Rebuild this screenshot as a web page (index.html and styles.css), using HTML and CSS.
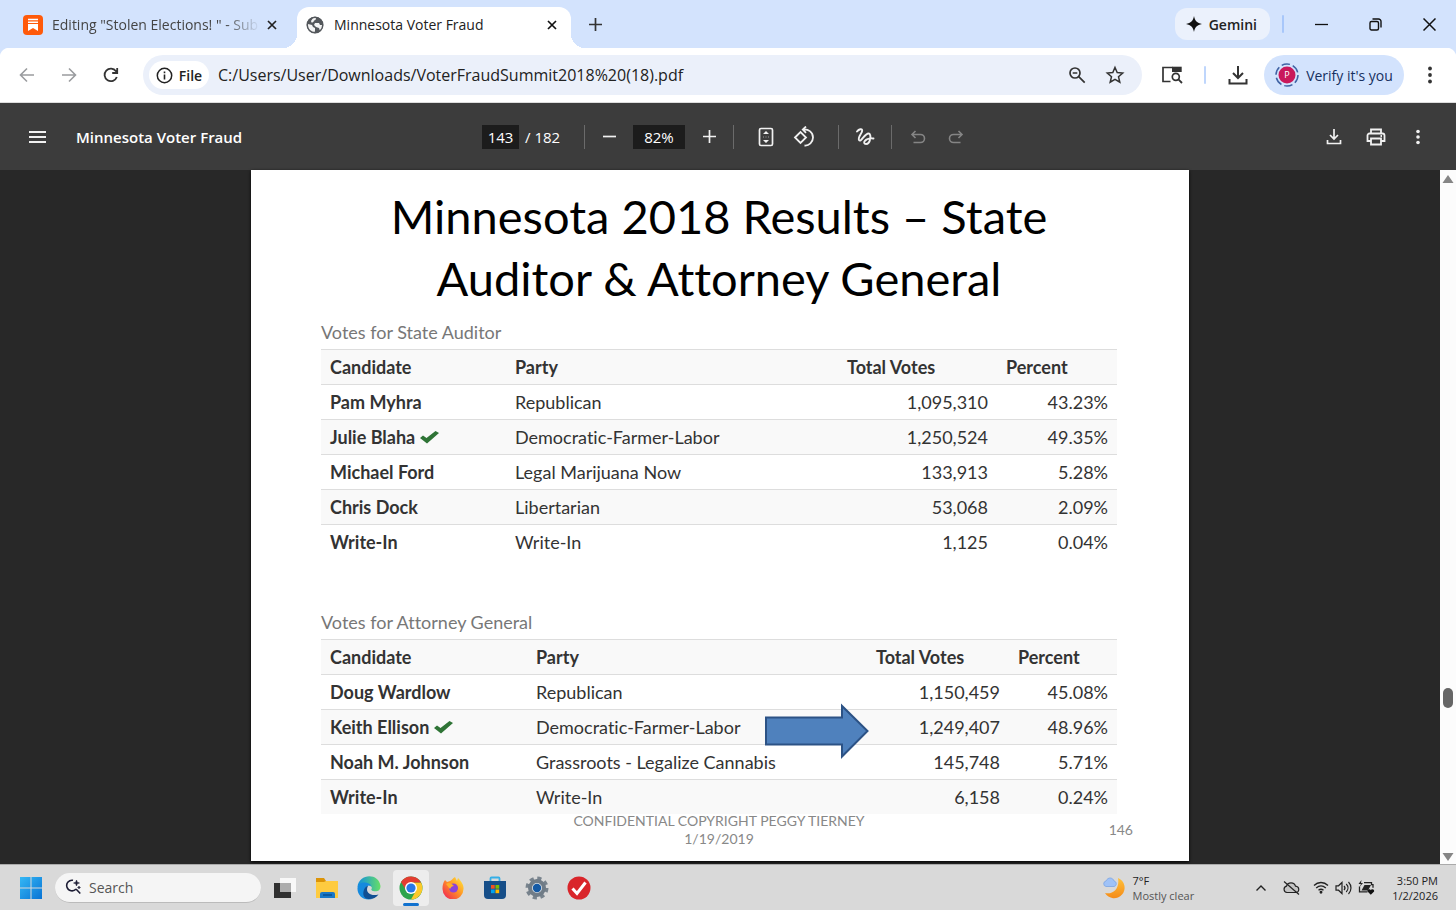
FILE: index.html
```html
<!DOCTYPE html>
<html lang="en">
<head>
    <meta charset="UTF-8">
    <meta name="viewport" content="width=device-width, initial-scale=1.0">
    <title>Minnesota Voter Fraud</title>
    <link rel="stylesheet" href="styles.css">
</head>
<body>
    <!-- tabs -->
    <header class="tab-strip">
        <div class="tab">
            <svg width="20" height="20" viewBox="0 0 20 20"><rect width="20" height="20" rx="4" fill="#ff5a0a"/><path d="M5 4.500h10M5 7.200h10" stroke="#fff" stroke-width="1.400"/><path d="M5 9h10v7l-5-3-5 3z" fill="#fff"/></svg>
            <span class="tab-title faded">Editing "Stolen Elections! " - Sub</span>
            <button class="tab-close" aria-label="Close tab"><svg width="10" height="10" viewBox="0 0 10 10"><path d="M1 1l8 8M9 1l-8 8" stroke="#222" stroke-width="1.700"/></svg></button>
        </div>
        <div class="tab active">
            <svg width="18" height="18" viewBox="0 0 18 18"><circle cx="9" cy="9" r="8.200" fill="#54585c"/><path d="M2 8l4 1 1 2 2 1v3l-1 2C4 16 1 12 2 8zM7 2l3-.5c0 2-.5 2.700-2 3-.3 1.500-1 2-2.500 2L5 5zM9 7h4l1 2h3c0 3-1 4.500-3 6l-1-3-3-1-2-2z" fill="#fff" opacity=".93"/><circle cx="9" cy="9" r="7.800" fill="none" stroke="#54585c" stroke-width="1.500"/></svg>
            <span class="tab-title">Minnesota Voter Fraud</span>
            <button class="tab-close" aria-label="Close tab"><svg width="10" height="10" viewBox="0 0 10 10"><path d="M1 1l8 8M9 1l-8 8" stroke="#111" stroke-width="1.700"/></svg></button>
        </div>
        <button class="new-tab" aria-label="New tab"><svg width="13" height="13" viewBox="0 0 13 13"><path d="M6.500 0v13M0 6.500h13" stroke="#333" stroke-width="1.700"/></svg></button>
        <div class="window-controls">
            <button class="gemini"><svg width="16" height="16" viewBox="0 0 16 16"><path d="M8 0C9 5 11 7 16 8 11 9 9 11 8 16 7 11 5 9 0 8 5 7 7 5 8 0z" fill="#111"/></svg>Gemini</button>
            <span class="bar-divider"></span>
            <button class="win-btn" aria-label="Minimize"><svg width="13" height="13" viewBox="0 0 13 13"><path d="M0 6.500h13" stroke="#111" stroke-width="1.300"/></svg></button>
            <button class="win-btn" aria-label="Restore"><svg width="13" height="13" viewBox="0 0 13 13" fill="none" stroke="#111" stroke-width="1.400"><rect x="1" y="3.500" width="8.500" height="8.500" rx="1.500"/><path d="M3.500 1h6A2.500 2.500 0 0 1 12 3.500v6"/></svg></button>
            <button class="win-btn" aria-label="Close"><svg width="13" height="13" viewBox="0 0 13 13"><path d="M.5.5l12 12M12.500.5l-12 12" stroke="#111" stroke-width="1.500"/></svg></button>
        </div>
    </header>

    <!-- address bar -->
    <nav class="toolbar">
        <div class="nav-buttons">
            <button class="icon-btn" aria-label="Back"><svg width="16" height="16" viewBox="0 0 16 16" fill="none" stroke="#9a9c9f" stroke-width="1.600"><path d="M15 8H2M8 1.500L1.500 8 8 14.500"/></svg></button>
            <button class="icon-btn" aria-label="Forward"><svg width="16" height="16" viewBox="0 0 16 16" fill="none" stroke="#9a9c9f" stroke-width="1.600"><path d="M1 8h13M8 1.500L14.500 8 8 14.500"/></svg></button>
            <button class="icon-btn" aria-label="Reload"><svg width="16" height="16" viewBox="0 0 16 16" fill="none" stroke="#333" stroke-width="1.800"><path d="M13.800 10A6.300 6.300 0 1 1 13 4.200L14 5.500M14.200 1v5H9.200"/></svg></button>
        </div>
        <div class="omnibox">
            <button class="file-chip"><svg width="17" height="17" viewBox="0 0 17 17"><circle cx="8.500" cy="8.500" r="7.200" fill="none" stroke="#222" stroke-width="1.500"/><path d="M8.500 7.600v4.800M8.500 4.500v1.700" stroke="#222" stroke-width="1.600"/></svg>File</button>
            <input type="text" aria-label="Address" value="C:/Users/User/Downloads/VoterFraudSummit2018%20(18).pdf">
            <button class="omni-btn" aria-label="Zoom"><svg width="18" height="18" viewBox="0 0 18 18" fill="none" stroke="#333" stroke-width="1.700"><circle cx="7" cy="7" r="5"/><path d="M10.700 10.700l6 6M4.700 7h4.600"/></svg></button>
            <button class="omni-btn" aria-label="Bookmark"><svg width="20" height="20" viewBox="0 0 20 20" fill="none" stroke="#333" stroke-width="1.500"><path d="M10 2.500l2.200 5.100 5.500.5-4.200 3.600 1.300 5.500L10 14.300l-4.800 2.900 1.300-5.500L2.300 8.100l5.500-.5z"/></svg></button>
        </div>
        <button class="icon-btn" aria-label="Search tabs"><svg width="22" height="20" viewBox="0 0 22 20"><path d="M9.500 16.500H2V2.500h9.500" fill="none" stroke="#333" stroke-width="1.700"/><path d="M11 1.700h9.700V7H11z" fill="#333"/><circle cx="14.800" cy="11.800" r="3.500" fill="#fff" stroke="#333" stroke-width="1.700"/><path d="M17.400 14.400l3.600 3.600" stroke="#333" stroke-width="1.800"/></svg></button>
        <span class="bar-divider"></span>
        <button class="icon-btn" aria-label="Downloads"><svg width="20" height="20" viewBox="0 0 20 20" fill="none" stroke="#333" stroke-width="2"><path d="M10 1v11.500M5 8l5 5 5-5M1.500 14v4.500h17V14"/></svg></button>
        <button class="profile">
            <svg width="24" height="24" viewBox="0 0 24 24"><circle cx="12" cy="12" r="11" fill="none" stroke="#3f62a4" stroke-width="1.500" stroke-dasharray="8.500 3"/><circle cx="12" cy="12" r="8.500" fill="#c9185b"/><text x="12" y="15" class="avatar-letter">P</text></svg>
            Verify it's you
        </button>
        <button class="icon-btn" aria-label="Menu"><svg width="4" height="18" viewBox="0 0 4 18" fill="#333"><circle cx="2" cy="2.500" r="1.900"/><circle cx="2" cy="9" r="1.900"/><circle cx="2" cy="15.500" r="1.900"/></svg></button>
    </nav>

    <!-- pdf viewer -->
    <div class="pdf-bar">
        <div class="pdf-left">
            <button class="pdf-btn" aria-label="Sidebar"><svg width="17" height="12" viewBox="0 0 17 12"><path d="M0 1h17M0 6h17M0 11h17" stroke="#f1f1f1" stroke-width="1.800"/></svg></button>
            <span class="pdf-title">Minnesota Voter Fraud</span>
        </div>
        <div class="pdf-center">
            <label class="page-count"><input type="text" class="page-input" value="143" aria-label="Page"> / 182</label>
            <div class="zoom-group">
                <button class="pdf-btn" aria-label="Zoom out"><svg width="13" height="13" viewBox="0 0 13 13"><path d="M0 6.500h13" stroke="#f1f1f1" stroke-width="1.700"/></svg></button>
                <input type="text" class="zoom-input" value="82%" aria-label="Zoom level">
                <button class="pdf-btn" aria-label="Zoom in"><svg width="13" height="13" viewBox="0 0 13 13"><path d="M0 6.500h13M6.500 0v13" stroke="#f1f1f1" stroke-width="1.700"/></svg></button>
            </div>
            <div class="fit-group">
                <button class="pdf-btn" aria-label="Fit to page"><svg width="16" height="20" viewBox="0 0 16 20"><rect x="1.500" y="1.500" width="13" height="17" rx="1.500" fill="none" stroke="#f1f1f1" stroke-width="1.700"/><path d="M8 4l3 3H5zM8 16l3-3H5z" fill="#f1f1f1"/><path d="M5 10h1M7.500 10h1M10 10h1" stroke="#999"/></svg></button>
                <button class="pdf-btn" aria-label="Rotate"><svg width="22" height="22" viewBox="0 0 22 22" fill="none" stroke="#f1f1f1" stroke-width="1.800"><path d="M2 11.500l5.500-5.500 5.500 5.500L7.500 17z"/><path d="M10 3.500c5-.8 10 2.500 10 8 0 4.500-4 8.500-8.500 8M13 .5l-3.200 3L13 6.800"/></svg></button>
            </div>
            <div class="ink-group">
                <button class="pdf-btn" aria-label="Draw"><svg width="20" height="18" viewBox="0 0 20 18" fill="none" stroke="#f1f1f1" stroke-width="1.900" stroke-linecap="round"><path d="M2 3.500C4 1 7 .3 7.200 2.500 7.400 5 2.500 9 4 12c2 3 5.500-6.500 9.500-6.500C17 5.500 15.500 16 11 16c-4 0-1.500-6.500 7.500-5.500"/></svg></button>
            </div>
            <div class="undo-group">
                <button class="pdf-btn" aria-label="Undo" disabled><svg width="16" height="14" viewBox="0 0 16 14" fill="none" stroke="#858585" stroke-width="1.600"><path d="M5.500 1L2 4.500 5.500 8M2 4.500h8.500a4 4 0 0 1 0 8H3.500"/></svg></button>
                <button class="pdf-btn" aria-label="Redo" disabled><svg width="16" height="14" viewBox="0 0 16 14" fill="none" stroke="#858585" stroke-width="1.600"><path d="M10.500 1L14 4.500 10.500 8M14 4.500H5.500a4 4 0 0 0 0 8h7"/></svg></button>
            </div>
        </div>
        <div class="pdf-right">
            <button class="icon-btn" aria-label="Download"><svg width="16" height="17" viewBox="0 0 16 17" fill="none" stroke="#f1f1f1" stroke-width="1.700"><path d="M8 1v9.500M4 7l4 4 4-4M1.500 12v3.500h13V12"/></svg></button>
            <button class="icon-btn" aria-label="Print"><svg width="20" height="18" viewBox="0 0 20 18" fill="none" stroke="#f1f1f1" stroke-width="1.800"><path d="M5 5V1.500h10V5M5 13H1.500V7.500A2 2 0 0 1 3.500 5.500h13a2 2 0 0 1 2 2V13H15"/><path d="M5 10.500h10v6H5z"/><path d="M14.500 8h1.500"/></svg></button>
            <button class="icon-btn" aria-label="More"><svg width="4" height="16" viewBox="0 0 4 16" fill="#f1f1f1"><circle cx="2" cy="2.500" r="1.800"/><circle cx="2" cy="8" r="1.800"/><circle cx="2" cy="13.500" r="1.800"/></svg></button>
        </div>
    </div>

    <main class="viewer">
        <div class="viewer-body">
            <section class="slide">
                <h1>Minnesota 2018 Results – State<br>Auditor &amp; Attorney General</h1>
                <div class="results auditor">
                    <table>
                        <caption>Votes for State Auditor</caption>
                        <thead>
                            <tr><th class="candidate">Candidate</th><th>Party</th><th class="votes">Total Votes</th><th class="percent">Percent</th></tr>
                        </thead>
                        <tbody>
                            <tr><th>Pam Myhra</th><td>Republican</td><td class="num">1,095,310</td><td class="num">43.23%</td></tr>
                            <tr><th>Julie Blaha <svg class="check" width="19" height="13" viewBox="0 0 19 13"><path d="M0 7l3-2.500 3.500 2.500L15.500 0 19 2 7 12.500z" fill="#2f7436"/></svg></th><td>Democratic-Farmer-Labor</td><td class="num">1,250,524</td><td class="num">49.35%</td></tr>
                            <tr><th>Michael Ford</th><td>Legal Marijuana Now</td><td class="num">133,913</td><td class="num">5.28%</td></tr>
                            <tr><th>Chris Dock</th><td>Libertarian</td><td class="num">53,068</td><td class="num">2.09%</td></tr>
                            <tr><th>Write-In</th><td>Write-In</td><td class="num">1,125</td><td class="num">0.04%</td></tr>
                        </tbody>
                    </table>
                </div>
                <div class="results attorney">
                    <table>
                        <caption>Votes for Attorney General</caption>
                        <thead>
                            <tr><th class="candidate">Candidate</th><th>Party</th><th class="votes">Total Votes</th><th class="percent">Percent</th></tr>
                        </thead>
                        <tbody>
                            <tr><th>Doug Wardlow</th><td>Republican</td><td class="num">1,150,459</td><td class="num">45.08%</td></tr>
                            <tr><th>Keith Ellison <svg class="check" width="19" height="13" viewBox="0 0 19 13"><path d="M0 7l3-2.500 3.500 2.500L15.500 0 19 2 7 12.500z" fill="#2f7436"/></svg></th><td>Democratic-Farmer-Labor</td><td class="num">1,249,407</td><td class="num">48.96%</td></tr>
                            <tr><th>Noah M. Johnson</th><td>Grassroots - Legalize Cannabis</td><td class="num">145,748</td><td class="num">5.71%</td></tr>
                            <tr><th>Write-In</th><td>Write-In</td><td class="num">6,158</td><td class="num">0.24%</td></tr>
                        </tbody>
                    </table>
                    <svg class="arrow" width="104" height="56" viewBox="0 0 104 56"><path d="M1 14.500h76V3l25.500 25L77 53.500V41.500H1z" fill="#4f81bd" stroke="#2c5285" stroke-width="2"/></svg>
                </div>
                <footer class="slide-footer">
                    <p>CONFIDENTIAL COPYRIGHT PEGGY TIERNEY<br>1/19/2019</p>
                    <span class="slide-number">146</span>
                </footer>
            </section>
        </div>
        <div class="scrollbar">
            <svg width="12" height="8" viewBox="0 0 12 8"><path d="M6 0l5.500 8H.5z" fill="#858585"/></svg>
            <span class="before-thumb"></span>
            <span class="thumb"></span>
            <span class="after-thumb"></span>
            <svg width="12" height="8" viewBox="0 0 12 8"><path d="M6 8L.5 0h11z" fill="#858585"/></svg>
        </div>
    </main>

    <!-- windows taskbar -->
    <footer class="taskbar">
        <button class="task-btn" aria-label="Start"><svg width="22" height="22" viewBox="0 0 22 22"><defs><linearGradient id="win" x1="0" y1="0" x2="1" y2="1"><stop offset="0" stop-color="#35b8f5"/><stop offset="1" stop-color="#0873d4"/></linearGradient></defs><path d="M0 0h10.500v10.500H0zM11.500 0H22v10.500H11.500zM0 11.500h10.500V22H0zM11.500 11.500H22V22H11.500z" fill="url(#win)"/></svg></button>
        <label class="search">
            <svg width="16" height="16" viewBox="0 0 16 16" fill="none" stroke="#1d1d35" stroke-width="1.600"><path d="M8 1.300A5.300 5.300 0 1 0 11 10M11 10l4.300 4.500"/><path d="M11.500 1l.8 2.200 2.200.8-2.200.8-.8 2.200-.8-2.200L8.500 4l2.200-.8zM14 7l.4 1.100 1.100.4-1.100.4L14 10l-.4-1.100-1.100-.4 1.100-.4z" fill="#1d1d35" stroke-width=".5"/></svg>
            <input type="text" placeholder="Search" aria-label="Search">
        </label>
        <button class="task-btn" aria-label="Task view"><svg width="24" height="22" viewBox="0 0 24 22"><path d="M1 6h17v15H1z" fill="#303030"/><path d="M7 1h16v14H7z" fill="#fafafa" opacity=".95"/><path d="M7 6h11v9H7z" fill="#adadad"/></svg></button>
        <button class="task-btn" aria-label="File Explorer"><svg width="24" height="22" viewBox="0 0 24 22"><path d="M1 1h8l2 3h12v6H1z" fill="#dc9408"/><path d="M1 5h8l2-1h12v17H1z" fill="#fecb40"/><path d="M5 21v-4a2 2 0 0 1 2-2h11a2 2 0 0 1 2 2v4z" fill="#1978c8"/><path d="M8 18h9" stroke="#074f91" stroke-width="1.500"/></svg></button>
        <button class="task-btn" aria-label="Edge"><svg width="24" height="24" viewBox="0 0 24 24"><defs><linearGradient id="edge" x1="0" y1="0" x2="1" y2="0"><stop offset="0" stop-color="#108ee0"/><stop offset="1" stop-color="#67df66"/></linearGradient></defs><path d="M.5 11C2-3 22-3 23.500 10c0 5-4 6-7.500 5-2-.7-2-1.500-1-3C14 8 3 7 .5 11z" fill="url(#edge)"/><path d="M.5 12C1 5 12 5 14.500 10 10 8 5 14 8.500 19c2 3 5 4 8 3.500C8 26 0 20 .5 12z" fill="#168ade"/><path d="M11 10c-3 5 1 11 10.500 8.500-5 7-17 6-15-3C7 12 9 10 11 10z" fill="#104f93"/></svg></button>
        <button class="task-btn current" aria-label="Chrome"><svg width="24" height="24" viewBox="0 0 24 24"><circle cx="12" cy="12" r="11.500" fill="#2da44b"/><path d="M12 6.500h10A11.500 11.500 0 0 1 12 23.500l5-9z" fill="#fdc928"/><path d="M2 6a11.500 11.500 0 0 1 20 .5H12L7 14z" fill="#e33c30"/><circle cx="12" cy="12" r="6" fill="#fff"/><circle cx="12" cy="12" r="4.600" fill="#2878e6"/></svg></button>
        <button class="task-btn" aria-label="Firefox"><svg width="22" height="22" viewBox="0 0 22 22"><defs><linearGradient id="fox" x1="1" y1="0" x2="0" y2="1"><stop offset="0" stop-color="#fff23f"/><stop offset=".45" stop-color="#ff9525"/><stop offset="1" stop-color="#ef155b"/></linearGradient></defs><path d="M3 3l2 2 3-1c1 0 3-3 5-4l2 4 1-3c3 3 6 7 5.500 11A10.500 10.500 0 0 1 .5 12C.5 8 1 6 3 3z" fill="url(#fox)"/><circle cx="11.500" cy="11" r="4.500" fill="#8b43d8"/><path d="M4 7c3-2 5-1 8 2-2 .3-3 1-4 3z" fill="#ffae28"/></svg></button>
        <button class="task-btn" aria-label="Microsoft Store"><svg width="24" height="24" viewBox="0 0 24 24"><path d="M7.500 6V2.500a1 1 0 0 1 1-1h7a1 1 0 0 1 1 1V6" fill="none" stroke="#35afe7" stroke-width="1.800"/><path d="M1 5h22v14a4 4 0 0 1-4 4H5a4 4 0 0 1-4-4z" fill="#164e88"/><path d="M8 9h3.700v3.700H8z" fill="#f25022"/><path d="M12.500 9h3.700v3.700h-3.700z" fill="#7fba00"/><path d="M8 13.500h3.700v3.700H8z" fill="#00a4ef"/><path d="M12.500 13.500h3.700v3.700h-3.700z" fill="#ffb900"/></svg></button>
        <button class="task-btn" aria-label="Settings"><svg width="24" height="24" viewBox="0 0 24 24"><circle cx="12" cy="12" r="9.500" fill="none" stroke="#78838d" stroke-width="4" stroke-dasharray="4 3.460"/><circle cx="12" cy="12" r="7" fill="#dce2e7" stroke="#707c87" stroke-width="4"/><circle cx="12" cy="12" r="4.200" fill="#145aa5"/></svg></button>
        <button class="task-btn" aria-label="Tasks"><svg width="24" height="24" viewBox="0 0 24 24"><circle cx="12" cy="12" r="11.500" fill="#d9252a"/><path d="M5.500 12.500l4.500 5L18.500 6.500" fill="none" stroke="#fff" stroke-width="3"/></svg></button>

        <div class="weather">
            <svg width="22" height="22" viewBox="0 0 22 22"><defs><linearGradient id="moon" x1="0" y1="0" x2="0" y2="1"><stop offset="0" stop-color="#ffc13b"/><stop offset="1" stop-color="#f58b18"/></linearGradient></defs><path d="M15 1a10.500 10.500 0 1 1-13 15C10 18 17 11 15 1z" fill="url(#moon)"/><path d="M3 9.500a2.800 2.800 0 0 1 0-5.500C5-.5 10 .5 11 4c3 .5 3 5 0 5.500z" fill="#9fc2f7" stroke="#719fe4" stroke-width=".7"/></svg>
            <p>7°F<br><span>Mostly clear</span></p>
        </div>
        <div class="tray">
            <button aria-label="Hidden icons"><svg width="10" height="6" viewBox="0 0 10 6"><path d="M.5 5.500L5 1l4.500 4.500" fill="none" stroke="#222" stroke-width="1.400"/></svg></button>
            <svg width="17" height="16" viewBox="0 0 17 16" fill="none" stroke="#222" stroke-width="1.200"><path d="M4 12.500a3.200 3.200 0 0 1-.5-6.300c1-4.500 8-4.500 9 0 4.500.5 4 6.300.5 6.300z" fill="#c4c4c4"/><path d="M1 1.500l15 13"/></svg>
            <div class="tray-group">
                <svg width="16" height="13" viewBox="0 0 16 13" fill="none" stroke="#222" stroke-width="1.300"><path d="M1 4.500c4-4 10-4 14 0M3.200 7c3-2.700 6.600-2.700 9.600 0M5.500 9.300c1.500-1.300 3.500-1.300 5 0"/><circle cx="8" cy="11.300" r=".8" fill="#222"/></svg>
                <svg width="17" height="14" viewBox="0 0 17 14" fill="none" stroke="#222" stroke-width="1.200"><path d="M1 4.800h2.500L7 1.500v11L3.500 9.200H1z"/><path d="M9 5c1.200 1.200 1.200 2.800 0 4M11.200 3c2.300 2.300 2.300 5.700 0 8M13.500 1c3.300 3.500 3.300 8.500 0 12"/></svg>
                <svg width="17" height="15" viewBox="0 0 17 15"><path d="M6 2.700h7.500v2H15v3M1.500 6.500v5.300h8" fill="none" stroke="#222" stroke-width="1.300"/><path d="M6.500 5H13l-3 5.500H3.500z" fill="#222"/><path d="M3.500 0L.5 4H3L1.500 7 5 3H3z" fill="#222"/><path d="M12.800 14.800L9.500 11.500c-.5-2.700 2.700-2.800 3.300-1.200.6-1.600 3.800-1.500 3.300 1.200z" fill="#111"/></svg>
            </div>
            <time>3:50 PM<br>1/2/2026</time>
        </div>
    </footer>
</body>
</html>
```
FILE: styles.css
```css
* {
    box-sizing: border-box;
}
body {
    margin: 0;
    min-height: 100vh;
    display: flex;
    flex-direction: column;
    font-family: "Open Sans", "Noto Sans", sans-serif;
    font-size: 14px;
    color: #222;
    background: #282828;
}
button, input {
    font: inherit;
    color: inherit;
    border: none;
    background: none;
    padding: 0;
    margin: 0;
}
button {
    display: flex;
    align-items: center;
    justify-content: center;
    flex-shrink: 0;
}
svg {
    flex-shrink: 0;
}
p {
    margin: 0;
}

/* tabs */
.tab-strip {
    display: flex;
    height: 48px;
    padding-top: 7px;
    background: #d3e3fd;
}
.tab {
    display: flex;
    align-items: center;
    width: 274px;
    gap: 9px;
    padding: 0 15px 6px 0;
}
.tab:first-child {
    width: 297px;
    padding-left: 23px;
    padding-right: 22px;
}
.tab-title {
    flex: 1;
    white-space: nowrap;
}
.tab-title.faded {
    color: #444;
    -webkit-mask-image: linear-gradient(to right, #000 84%, transparent 101%);
    mask-image: linear-gradient(to right, #000 84%, transparent 101%);
}
.tab.active {
    position: relative;
    gap: 10px;
    padding-left: 9px;
    padding-right: 14px;
    background: #fff;
    border-radius: 12px 12px 0 0;
}
.tab.active::before, .tab.active::after {
    content: "";
    position: absolute;
    bottom: 0;
    width: 14px;
    height: 14px;
}
.tab.active::before {
    right: 100%;
    background: radial-gradient(circle at 0 0, transparent 14px, #fff 14px);
}
.tab.active::after {
    left: 100%;
    background: radial-gradient(circle at 100% 0, transparent 14px, #fff 14px);
}
.tab-close {
    width: 10px;
    height: 20px;
}
.new-tab {
    width: 48px;
    height: 34px;
}
.window-controls {
    display: flex;
    align-items: center;
    height: 34px;
    margin-left: auto;
}
.gemini {
    height: 32px;
    padding: 0 13px 0 11px;
    gap: 7px;
    border-radius: 12px;
    background: #ebf1fc;
    font-weight: 600;
}
.bar-divider {
    width: 2px;
    height: 18px;
    margin: 0 6px;
    border-radius: 1px;
    background: #bfd6fc;
}
.window-controls .bar-divider {
    margin: 0 10px 0 12px;
    background: #a8c7fa;
}
.win-btn {
    width: 54px;
    height: 32px;
}

/* address bar */
.toolbar {
    display: flex;
    align-items: center;
    gap: 10px;
    height: 55px;
    padding: 0 10px 0 11px;
    background: radial-gradient(circle at 10px 10px, #fff 10px, #d3e3fd 11px) left top / 10px 10px no-repeat,
        radial-gradient(circle at 0 10px, #fff 10px, #d3e3fd 11px) right top / 10px 10px no-repeat,
        #fff;
    border-bottom: 1px solid #ddd;
}
.nav-buttons {
    display: flex;
    gap: 10px;
    margin-right: 6px;
}
.icon-btn {
    width: 32px;
    height: 32px;
}
.omnibox {
    flex: 1;
    display: flex;
    align-items: center;
    height: 40px;
    margin-right: 4px;
    padding: 0 8px 0 6px;
    border-radius: 20px;
    background: #ebf0fa;
}
.omnibox input {
    flex: 1;
    min-width: 0;
    margin-left: 9px;
    font-size: 16px;
}
.file-chip {
    width: 60px;
    height: 28px;
    gap: 6px;
    border-radius: 14px;
    background: #fff;
    font-weight: 600;
}
.omni-btn {
    width: 38px;
    height: 32px;
}
.profile {
    width: 140px;
    height: 40px;
    gap: 7px;
    border-radius: 20px;
    background: #d3e3fd;
    color: #16305f;
}
.avatar-letter {
    font-size: 9px;
    fill: #fff;
    text-anchor: middle;
}

/* pdf toolbar */
.pdf-bar {
    display: grid;
    grid-template-columns: 1fr auto 1fr;
    align-items: center;
    height: 67px;
    background: #3c3c3c;
    color: #fff;
}
.pdf-left {
    display: flex;
    align-items: center;
    gap: 27px;
    padding-left: 25px;
}
.pdf-title {
    font-size: 15px;
    font-weight: 600;
}
.pdf-center, .page-count, .zoom-group, .fit-group, .ink-group, .undo-group {
    display: flex;
    align-items: center;
}
.pdf-center {
    font-size: 15px;
}
.page-count {
    gap: 6px;
    width: 102px;
}
.page-input, .zoom-input {
    width: 37px;
    height: 24px;
    background: #1c1c1c;
    text-align: center;
}
.zoom-input {
    width: 52px;
}
.zoom-group {
    gap: 12px;
    padding: 0 12px;
    border-left: 1px solid #6b6b6b;
    border-right: 1px solid #6b6b6b;
}
.fit-group {
    gap: 14px;
    padding: 0 22px 0 20px;
}
.ink-group {
    padding: 0 14px;
    border-left: 1px solid #6b6b6b;
    border-right: 1px solid #6b6b6b;
}
.undo-group {
    gap: 14px;
    padding: 0 6px 0 14px;
}
.pdf-btn {
    width: 24px;
    height: 24px;
}
.pdf-right {
    display: flex;
    justify-content: flex-end;
    gap: 10px;
    padding-right: 22px;
}

/* slide */
.viewer {
    flex: 1;
    display: flex;
}
.viewer-body {
    flex: 1;
    display: flex;
    justify-content: center;
    padding-bottom: 3px;
}
.slide {
    width: 100%;
    max-width: 938px;
    padding: 15px 72px 0 70px;
    background: #fff;
    box-shadow: 0 1px 3px #000;
    font-family: Lato, "Open Sans", sans-serif;
    font-variant-ligatures: none;
}
.slide h1 {
    margin: 0 0 12px;
    font-size: 47px;
    font-weight: 400;
    line-height: 62px;
    text-align: center;
    color: #000;
}
.results {
    position: relative;
}
.results table {
    width: 100%;
    table-layout: fixed;
    border-collapse: collapse;
    font-size: 18px;
    color: #333;
}
.results caption {
    height: 28px;
    line-height: 22px;
    text-align: left;
    color: #777;
}
.results th, .results td {
    height: 35px;
    padding: 0 9px;
    border-top: 1px solid #ddd;
    text-align: left;
    line-height: 20px;
    white-space: nowrap;
}
.results th {
    font-weight: 700;
}
.results thead tr, .results tbody tr:nth-child(even) {
    background: #f9f9f9;
}
.results .num {
    text-align: right;
}
.candidate {
    width: 185px;
}
.votes {
    width: 159px;
}
.percent {
    width: 120px;
}
.attorney {
    margin-top: 51px;
}
.attorney .candidate {
    width: 206px;
}
.attorney .votes {
    width: 142px;
}
.attorney .percent {
    width: 108px;
}
.arrow {
    position: absolute;
    left: 444px;
    bottom: 55px;
}
.slide-footer {
    position: relative;
    margin-top: -2px;
    text-align: center;
    font-size: 14px;
    line-height: 18px;
    color: #888;
}
.slide-number {
    position: absolute;
    right: -16px;
    top: 9px;
}
.scrollbar {
    display: flex;
    flex-direction: column;
    align-items: center;
    width: 16px;
    padding: 5px 0 3px;
    background: #fcfcfc;
}
.thumb {
    width: 10px;
    height: 20px;
    border-radius: 5px;
    background: #666;
}
.before-thumb {
    flex: 505;
}
.after-thumb {
    flex: 145;
}

/* taskbar */
.taskbar {
    display: flex;
    align-items: center;
    gap: 6px;
    height: 46px;
    padding: 0 18px 0 13px;
    background: #d9d9d9;
    border-top: 1px solid #aaa;
    font-size: 11px;
    line-height: 15px;
}
.task-btn {
    width: 36px;
    height: 36px;
    border-radius: 4px;
}
.task-btn.current {
    position: relative;
    background: #ededed;
}
.task-btn.current::after {
    content: "";
    position: absolute;
    bottom: 0;
    width: 16px;
    height: 3px;
    border-radius: 2px;
    background: #1272cf;
}
.search {
    display: flex;
    align-items: center;
    gap: 8px;
    width: 206px;
    height: 30px;
    padding: 0 10px;
    border-radius: 15px;
    border-bottom: 1px solid #bbb;
    background: #f5f5f5;
}
.search input {
    flex: 1;
    min-width: 0;
    font-size: 14px;
}
.search input::placeholder {
    color: #555;
    opacity: 1;
}
.weather {
    display: flex;
    align-items: center;
    gap: 8px;
    margin-left: auto;
}
.weather span {
    color: #555;
}
.tray {
    display: flex;
    align-items: center;
    gap: 17px;
    margin-left: 56px;
}
.tray-group {
    display: flex;
    align-items: center;
    gap: 6px;
    margin-left: -4px;
}
.tray time {
    text-align: right;
}
```
